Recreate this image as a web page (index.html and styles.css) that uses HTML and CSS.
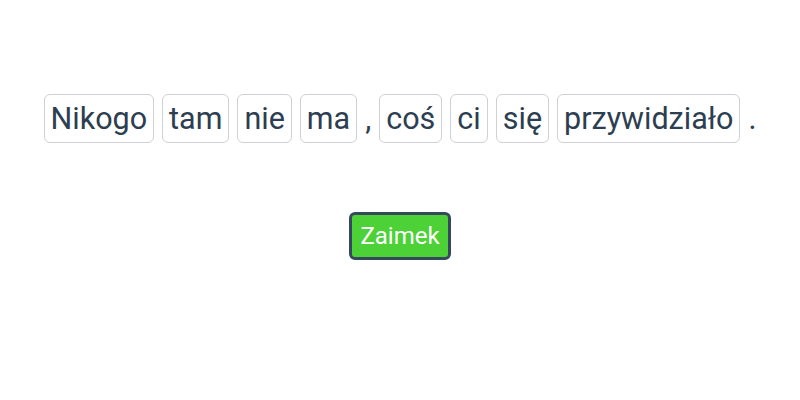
FILE: index.html
```html
<!DOCTYPE html>
<html lang="pl">
<head>
<meta charset="utf-8">
<link rel="stylesheet" href="styles.css">
</head>
<body>
<main class="app">
  <div class="sentence">
    <span class="word">Nikogo</span>
    <span class="word">tam</span>
    <span class="word">nie</span>
    <span class="word">ma</span>
    <span class="punct">,</span>
    <span class="word">coś</span>
    <span class="word">ci</span>
    <span class="word">się</span>
    <span class="word">przywidziało</span>
    <span class="punct">.</span>
  </div>
  <button class="answer">Zaimek</button>
</main>
</body>
</html>
```
FILE: styles.css
```css
html, body {
  margin: 0;
  padding: 0;
  background: #ffffff;
}
body {
  font-family: Roboto, "Liberation Sans", sans-serif;
  color: #2c3e50;
}
.app {
  display: flex;
  flex-direction: column;
  align-items: center;
  padding-top: 94px;
}
.sentence {
  display: flex;
  align-items: center;
  gap: 8px;
  font-size: 30.5px;
}
.word {
  display: block;
  border: 1px solid #cdd1d5;
  border-radius: 6px;
  padding: 0 6px;
  line-height: 47px;
}
.punct {
  display: block;
  line-height: 47px;
}
.answer {
  margin-top: 69px;
  font-family: Roboto, "Liberation Sans", sans-serif;
  font-size: 24px;
  color: #ffffff;
  background: #4cd137;
  border: 3px solid #35485c;
  border-radius: 6px;
  padding: 0 8px;
  height: 48px;
  line-height: 42px;
}
```
